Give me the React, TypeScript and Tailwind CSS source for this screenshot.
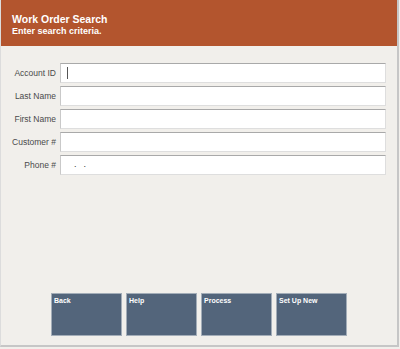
const fields = ["Account ID", "Last Name", "First Name", "Customer #", "Phone #"]
const buttons = ["Back", "Help", "Process", "Set Up New"]

function Field({ label, index }: { label: string; index: number }) {
  return (
    <div className="flex items-center h-[20px]">
      <div className="w-[56px] pr-[1px] text-right text-[8.5px] text-[#4a4a4a] leading-none">{label}</div>
      <div className="ml-[3px] w-[326px] h-[20px] bg-white border border-t-[#a9a9a9] border-l-[#c9c9c9] border-r-[#dedede] border-b-[#dedede] flex items-center">
        {index === 0 && <div className="ml-[6px] w-[1px] h-[12px] bg-[#555]" />}
        {label === "Phone #" && (
          <div className="text-[9px] text-[#333] leading-none mt-[-2px]">
            <span className="ml-[13px]">.</span>
            <span className="ml-[7px]">.</span>
          </div>
        )}
      </div>
    </div>
  )
}

export default function App() {
  return (
    <div
      className="w-[400px] h-[349px] bg-[#f1efeb] overflow-hidden"
      style={{ fontFamily: '"Liberation Sans", Arial, sans-serif' }}
    >
      <div className="w-[399px] h-[347px] border-r-2 border-b-2 border-l border-[#c6c6c6] border-l-[#dcdcdc] flex flex-col">
        <div className="h-[46px] bg-[#b3552e] pl-[11px] pt-[14px] text-white font-bold">
          <div className="text-[10.5px] leading-[11px]">Work Order Search</div>
          <div className="text-[9px] leading-[10px] mt-[1px]">Enter search criteria.</div>
        </div>
        <div className="mt-[17px] flex flex-col gap-[3px]">
          {fields.map((f, i) => (
            <Field key={f} label={f} index={i} />
          ))}
        </div>
        <div className="mt-[118px] ml-[50px] flex gap-[4px]">
          {buttons.map((b) => (
            <div
              key={b}
              className="w-[71px] h-[43px] bg-[#53657b] border border-[#a3adb8] px-[2px] pt-[3px] text-[7px] font-bold text-white leading-none"
            >
              {b}
            </div>
          ))}
        </div>
      </div>
    </div>
  )
}
